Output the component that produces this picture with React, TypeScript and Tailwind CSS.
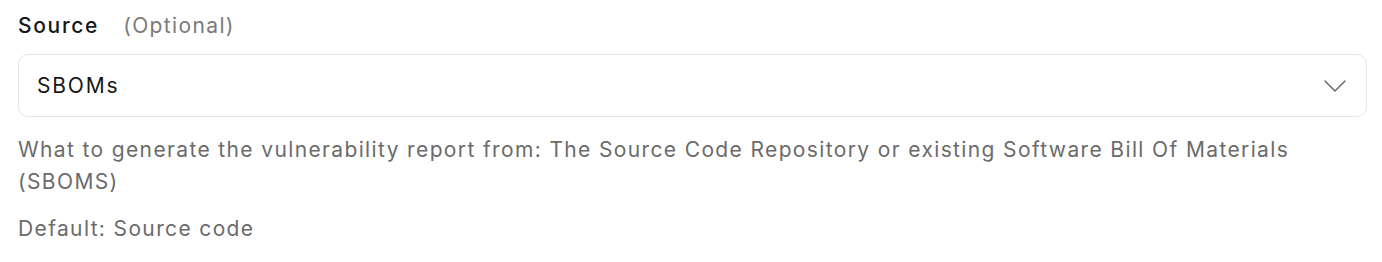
export default function App() {
  return (
    <div className="bg-white w-[1382px] h-[262px] px-[18px] pt-[11px]" style={{ fontFamily: "Inter, 'Noto Sans', sans-serif" }}>
      {/* Label */}
      <div className="flex items-baseline gap-[24px] h-[30px]">
        <span className="text-[21px] font-medium tracking-[0.08em] text-[#171717] leading-[30px]">Source</span>
        <span className="text-[21px] tracking-[0.065em] text-[#7a7a7a] leading-[30px]">(Optional)</span>
      </div>

      {/* Select */}
      <div className="mt-[13px] h-[63px] w-[1349px] flex items-center justify-between border border-[#e5e5e5] rounded-[10px] pl-[18px] pr-[20px]">
        <span className="text-[21px] tracking-[0.085em] text-[#171717]">SBOMs</span>
        <svg width="22" height="12" viewBox="0 0 22 12" fill="none" className="text-[#6b6b6b]">
          <path d="M1 1l10 10 10-10" stroke="currentColor" strokeWidth="1.5" strokeLinecap="round" strokeLinejoin="round" />
        </svg>
      </div>

      {/* Help text */}
      <p className="mt-[17px] w-[1349px] text-[21px] tracking-[0.065em] leading-[32px] text-[#6b6b6b]">
        What to generate the vulnerability report from: The Source Code Repository or existing Software Bill Of Materials (SBOMS)
      </p>
      <p className="mt-[15px] text-[21px] tracking-[0.065em] leading-[32px] text-[#6b6b6b]">Default: Source code</p>
    </div>
  );
}
